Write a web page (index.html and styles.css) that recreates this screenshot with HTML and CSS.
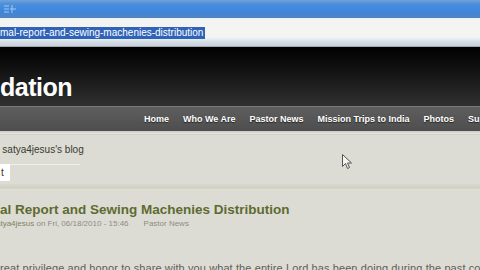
FILE: index.html
```html
<!DOCTYPE html>
<html lang="en">
<head>
    <meta charset="UTF-8">
    <meta name="viewport" content="width=device-width, initial-scale=1.0">
    <title>satya4jesus's blog</title>
    <link rel="stylesheet" href="styles.css">
</head>
<body>
    <div class="titlebar">
        <svg class="tb-icon" width="14" height="10" viewBox="0 0 14 10">
            <path d="M1 2h5M1 5h5M1 8h5M9 1v8M7 5h6" stroke="#a9c6ea" stroke-width="1" fill="none"/>
        </svg>
    </div>
    <div class="addressbar">
        <span class="url">mal-report-and-sewing-machenies-distribution</span>
    </div>
    <div class="header">
        <div class="site-name">dation</div>
    </div>
    <ul class="nav">
        <li>Home</li>
        <li>Who We Are</li>
        <li>Pastor News</li>
        <li>Mission Trips to India</li>
        <li>Photos</li>
        <li>Support</li>
    </ul>
    <div class="strip"></div>
    <div class="content">
        <div class="breadcrumb">&raquo; satya4jesus's blog</div>
        <div class="tabs">
            <span class="tab">t</span>
            <span class="tab-line"></span>
        </div>
        <div class="divider"></div>
        <h2 class="node-title">al Report and Sewing Machenies Distribution</h2>
        <div class="meta">
            <span class="submitted"><span class="author">satya4jesus</span> on Fri, 06/18/2010 - 15:46</span>
            <span class="term">Pastor News</span>
        </div>
        <p class="body-text">reat privilege and honor to share with you what the entire Lord has been doing during the past couple of months</p>
    </div>
    <svg class="cursor" width="10" height="16" viewBox="0 0 10 16">
        <path d="M0.5 0.5v12l3-3 2 5 2-1-2-4.5h4z" fill="#f4f4f0" stroke="#555" stroke-width="1"/>
    </svg>
</body>
</html>
```

FILE: styles.css
```css
body {
    margin: 0;
    width: 480px;
    height: 270px;
    overflow: hidden;
    background-color: #dcdcd4;
    font-family: 'Liberation Sans', Arial, sans-serif;
}

.titlebar {
    height: 18px;
    background: linear-gradient(#74a2d8 0, #4b8edc 4px, #3b87dc 12px, #5682bc 18px);
}

.tb-icon {
    display: block;
    padding: 4px 0 0 3px;
}

.addressbar {
    height: 29px;
    background: linear-gradient(#dff3f6 0, #f3f4f2 2px, #f4f4f2 19px, #e4eef2 21px, #d4dce6 24px, #c8d0dc 28px, #7d838c 29px);
}

.url {
    display: inline-block;
    margin-top: 9px;
    height: 12px;
    line-height: 12px;
    padding-right: 2px;
    background-color: #2f63b8;
    color: #ffffff;
    font-size: 10px;
    white-space: nowrap;
}

.header {
    height: 59px;
    background: linear-gradient(#000000, #0e0e0e 30%, #303030);
}

.site-name {
    padding-top: 28px;
    font-size: 25px;
    line-height: 1;
    font-weight: bold;
    color: #ffffff;
    letter-spacing: -0.5px;
}

.nav {
    display: flex;
    gap: 14px;
    margin: 0;
    padding: 0 0 0 144px;
    list-style: none;
    height: 24px;
    line-height: 25px;
    border-top: 1px solid #787878;
    background: linear-gradient(#5e5e5e, #4e4e4e);
    white-space: nowrap;
    overflow: hidden;
}

.nav li {
    font-size: 9px;
    font-weight: bold;
    color: #ffffff;
    text-shadow: 0 1px 1px #222;
}

.strip {
    height: 3px;
    background: linear-gradient(#c9c9c1, #e8e8e0);
    border-bottom: 1px solid #d2d2ca;
}

.breadcrumb {
    margin: 9px 0 0 -6px;
    font-size: 10px;
    line-height: 12px;
    color: #3a3a30;
}

.tabs {
    display: flex;
    margin-top: 8px;
    height: 17px;
}

.tab {
    width: 10px;
    padding-left: 1px;
    box-sizing: border-box;
    background-color: #ffffff;
    font-size: 10px;
    line-height: 17px;
    color: #333333;
}

.tab-line {
    width: 70px;
    border-top: 1px solid #f0f0ea;
}

.divider {
    margin-top: 3px;
    height: 6px;
    background: linear-gradient(#d9d9d0, #cfcfc3 70%, #e4e4dc);
}

.node-title {
    margin: 12px 0 0 0;
    font-size: 13.5px;
    line-height: 16px;
    color: #5d6b30;
    white-space: nowrap;
}

.meta {
    display: flex;
    gap: 15px;
    margin: 0 0 0 -8px;
    font-size: 8px;
    line-height: 11px;
    color: #8c8c84;
    white-space: nowrap;
}

.author {
    color: #7c8460;
}

.body-text {
    margin: 32px 0 0 0;
    font-size: 11px;
    line-height: 14px;
    letter-spacing: 0.1px;
    color: #5e5e58;
    white-space: nowrap;
}

.cursor {
    position: absolute;
    left: 342px;
    top: 154px;
}
```
